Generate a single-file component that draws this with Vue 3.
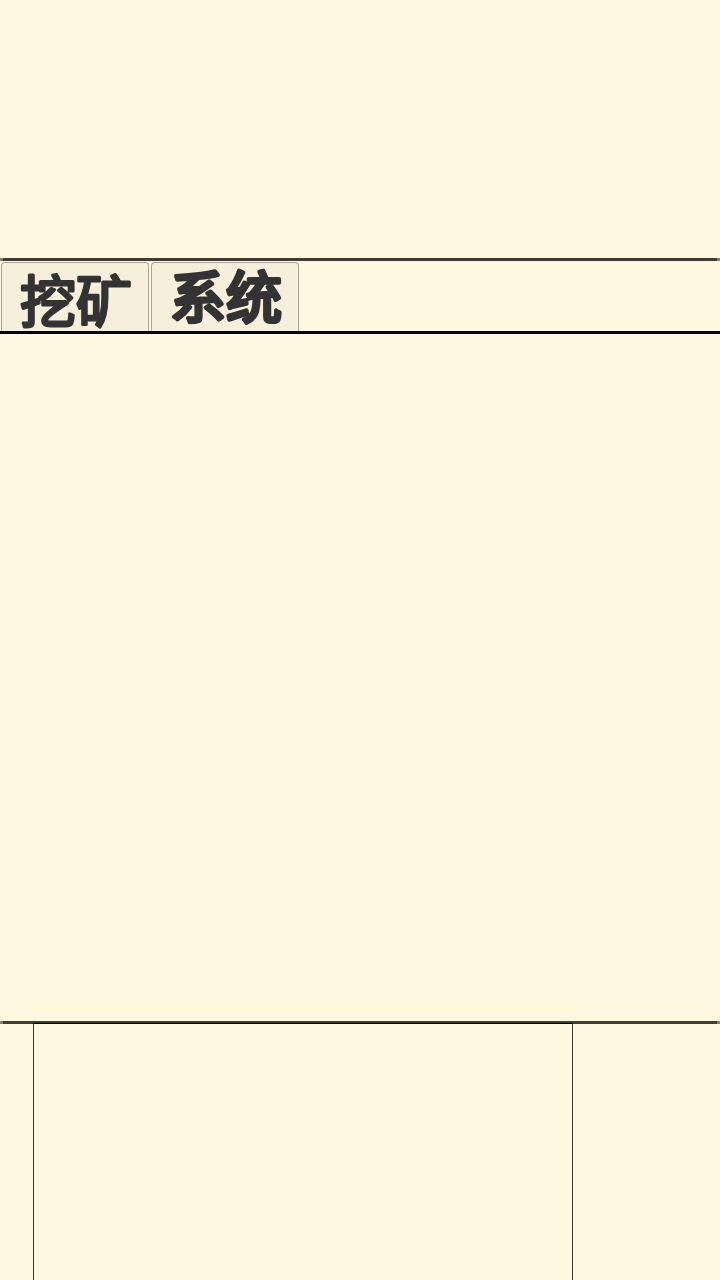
<script setup>
import { ref } from "vue";

const tabs = [
  { id: "mine", name: "挖矿" },
  { id: "system", name: "系统" },
];
const activeTab = ref("system");
</script>

<template>
  <div class="game">
    <header class="scene"></header>
    <div class="divider"></div>

    <nav class="tabs">
      <button
        v-for="tab in tabs"
        :key="tab.id"
        type="button"
        class="tab"
        :class="{ active: activeTab === tab.id }"
        @click="activeTab = tab.id"
      >
        <svg class="label" width="146" height="68">
          <text x="74" :y="activeTab === tab.id ? 55 : 59" text-anchor="middle">{{ tab.name }}</text>
        </svg>
      </button>
    </nav>

    <main class="content"></main>
    <div class="divider"></div>

    <footer class="bottom">
      <section class="log"></section>
    </footer>
  </div>
</template>

<style>
body {
  margin: 0;
  background-color: #fff8e1;
}
</style>

<style scoped>
.game {
  display: flex;
  flex-direction: column;
  min-height: 100vh;
  background-color: #fff8e1;
}

.scene {
  flex: 0 0 258px;
}

.divider {
  flex: 0 0 3px;
  background: linear-gradient(
    to right,
    #85816f 3px,
    #403d37 3px,
    #403d37 calc(100% - 3px),
    #85816f calc(100% - 3px)
  );
}

.content {
  flex: 1;
}

.tabs {
  display: flex;
  gap: 2px;
  padding: 1px 1px 0;
  border-bottom: 3px solid #000;
}

.tab {
  box-sizing: border-box;
  width: 148px;
  height: 69px;
  padding: 0;
  border: 1px solid #aaa494;
  border-bottom: none;
  border-radius: 4px 4px 0 0;
  background-color: #f5efdc;
  cursor: pointer;
}

.label {
  display: block;
  overflow: visible;
  fill: #333;
  stroke: #333;
  stroke-width: 3px;
  stroke-linejoin: round;
  font-family: "Noto Sans CJK SC", sans-serif;
  font-size: 56px;
  font-weight: 400;
}

.tab.active .label {
  stroke-width: 4px;
}

.bottom {
  display: flex;
  height: 257px;
  margin-top: -1px;
  padding-left: 33px;
}

.log {
  box-sizing: border-box;
  width: 540px;
  border: 1px solid #403d37;
  border-top-color: #000;
  border-bottom: none;
}
</style>
